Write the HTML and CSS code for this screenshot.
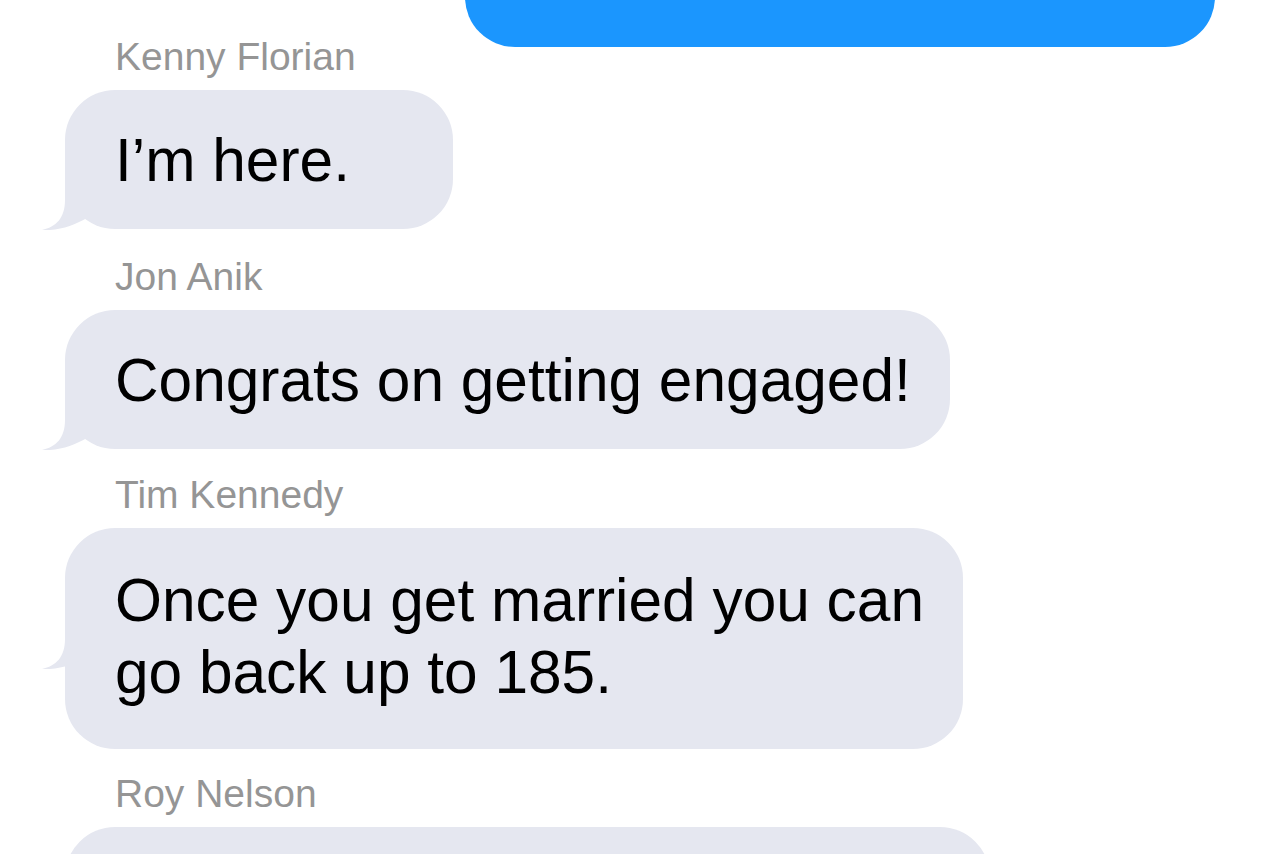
FILE: index.html
```html
<!DOCTYPE html>
<html lang="en">

<head>
    <meta charset="UTF-8">
    <meta name="viewport" content="width=device-width, initial-scale=1.0">
    <title>Messages</title>
    <link rel="stylesheet" href="styles.css">
</head>

<body>
    <div class="thread">
        <!-- sent message, mostly scrolled off the top -->
        <div class="row sent">
            <div class="bubble blue"></div>
        </div>

        <div class="row">
            <div class="name">Kenny Florian</div>
            <div class="bubble gray short">
                I’m here.
                <svg class="tail" viewBox="0 0 50 50" width="50" height="50"><path d="M23 0 L23 20 C23 38 14 47 0 50 C18 51 32 45 45 38 L45 0 Z" /></svg>
            </div>
        </div>

        <div class="row">
            <div class="name">Jon Anik</div>
            <div class="bubble gray">
                Congrats on getting engaged!
                <svg class="tail" viewBox="0 0 50 50" width="50" height="50"><path d="M23 0 L23 20 C23 38 14 47 0 50 C18 51 32 45 45 38 L45 0 Z" /></svg>
            </div>
        </div>

        <div class="row close">
            <div class="name">Tim Kennedy</div>
            <div class="bubble gray tall">
                Once you get married you can<br>go back up to 185.
                <svg class="tail" viewBox="0 0 50 50" width="50" height="50"><path d="M23 0 L23 20 C23 38 14 47 0 50 C18 51 32 45 45 38 L45 0 Z" /></svg>
            </div>
        </div>

        <div class="row closer">
            <div class="name">Roy Nelson</div>
            <div class="bubble gray cut"></div>
        </div>
    </div>
</body>

</html>
```

FILE: styles.css
```css
* {
    margin: 0;
    padding: 0;
}

body {
    background-color: #fff;
    font-family: "Liberation Sans", Arial, sans-serif;
    overflow: hidden;
    height: 854px;
}

.thread {
    display: flex;
    flex-direction: column;
    padding: 0 65px;
}

.row {
    display: flex;
    flex-direction: column;
    align-items: flex-start;
    margin-top: 28px;
}

.row.close {
    margin-top: 26px;
}

.row.closer {
    margin-top: 25px;
}

.row.sent {
    align-items: flex-end;
    margin-top: -93px;
    margin-bottom: -38px;
}

.name {
    margin-left: 50px;
    margin-bottom: 13px;
    font-size: 39px;
    line-height: 40px;
    color: #959595;
}

.bubble {
    position: relative;
    border-radius: 50px;
    font-size: 60.4px;
    line-height: 72px;
    color: #000;
}

.bubble.blue {
    width: 750px;
    height: 140px;
    background-color: #1b96fe;
}

.bubble.gray {
    padding: 34px 39px 33px 50px;
    background-color: #e5e7f0;
}

.bubble.short {
    min-width: 299px;
}

.bubble.tall {
    padding-top: 36px;
    padding-bottom: 41px;
}

.bubble.cut {
    width: 836px;
    height: 72px;
}

.tail {
    position: absolute;
    left: -23px;
    bottom: -1px;
    fill: #e5e7f0;
}

.tall .tail {
    bottom: 80px;
}
```
